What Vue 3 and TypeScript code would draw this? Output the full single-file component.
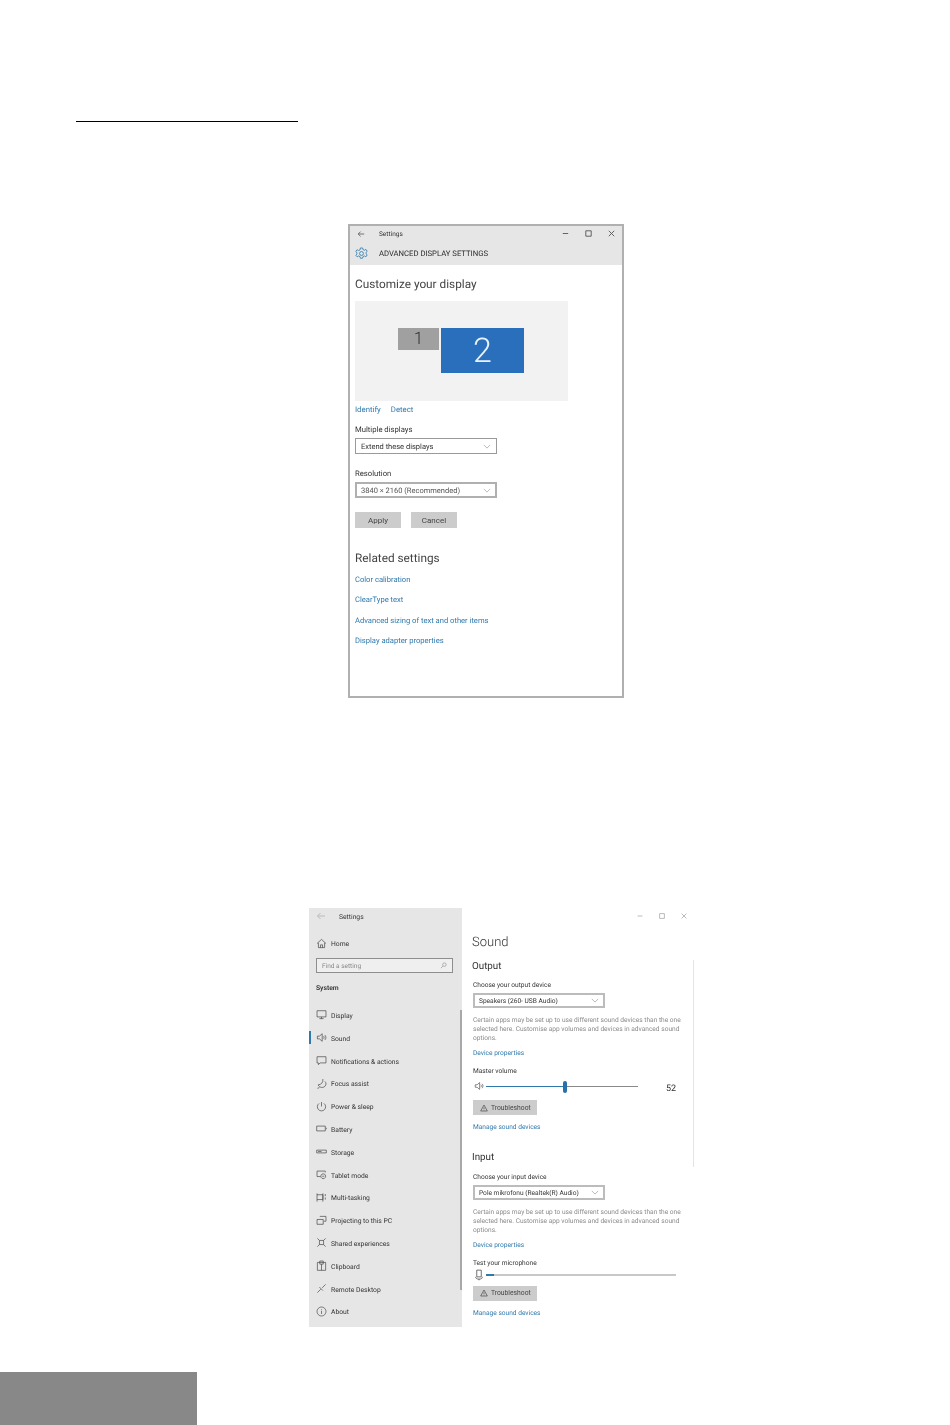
<template>
  <main class="page">
    <div class="rule"></div>

    <section class="display-win">
      <header class="display-head">
        <div class="title-row">
          <svg class="back" viewBox="0 0 10 10"><path d="M9 5H1.5M4.5 2 1.5 5l3 3" /></svg>
          <span class="title-text">Settings</span>
          <div class="win-controls">
            <svg viewBox="0 0 10 10"><path d="M2 5h6" /></svg>
            <svg viewBox="0 0 10 10"><path d="M2 2h6v6H2z" /></svg>
            <svg viewBox="0 0 10 10"><path d="m2 2 6 6M8 2 2 8" /></svg>
          </div>
        </div>
        <div class="page-row">
          <svg class="gear" viewBox="0 0 16 16">
            <path d="M6.6 1.2h2.8l.4 2 1.8.8 1.8-1.1 1.6 2.4-1.4 1.3v1.8l1.4 1.3-1.6 2.4-1.8-1.1-1.8.8-.4 2H6.6l-.4-2-1.8-.8-1.8 1.1L1 10.1l1.4-1.3V7L1 5.7l1.6-2.4 1.8 1.1 1.8-.8z" />
            <circle cx="8" cy="8" r="2.4" />
          </svg>
          <span class="page-title">ADVANCED DISPLAY SETTINGS</span>
        </div>
      </header>

      <div class="display-body">
        <h2 class="big-title">Customize your display</h2>
        <div class="preview">
          <div class="monitor one">1</div>
          <div class="monitor two">2</div>
        </div>
        <div class="identify">
          <a>Identify</a>
          <a>Detect</a>
        </div>
        <div class="field-label first">Multiple displays</div>
        <div class="select wide">
          <span>Extend these displays</span>
          <svg class="chev" viewBox="0 0 10 6"><path d="m1 1 4 4 4-4" /></svg>
        </div>
        <div class="field-label second">Resolution</div>
        <div class="select wide heavy">
          <span class="muted-value">3840 × 2160 (Recommended)</span>
          <svg class="chev" viewBox="0 0 10 6"><path d="m1 1 4 4 4-4" /></svg>
        </div>
        <div class="actions">
          <button>Apply</button>
          <button>Cancel</button>
        </div>
        <h2 class="big-title related">Related settings</h2>
        <div class="related-links">
          <a v-for="link in relatedLinks" :key="link">{{ link }}</a>
        </div>
      </div>
    </section>

    <section class="sound-win">
      <aside class="sidebar">
        <div class="side-title">
          <svg class="back faint" viewBox="0 0 10 10"><path d="M9 5H1.5M4.5 2 1.5 5l3 3" /></svg>
          <span>Settings</span>
        </div>
        <div class="home">
          <svg class="nav-icon" viewBox="0 0 16 16"><path d="M1.5 8 8 2l6.5 6M3.5 7v7h9V7M6.5 14v-4h3v4" /></svg>
          <span>Home</span>
        </div>
        <div class="search">
          <span>Find a setting</span>
          <svg viewBox="0 0 12 12"><circle cx="7.5" cy="4.5" r="3" /><path d="M5.2 6.8 1.5 10.5" /></svg>
        </div>
        <div class="system">System</div>
        <nav class="nav">
          <div v-for="item in navItems" :key="item.label" class="nav-item" :class="{ active: item.active }">
            <svg class="nav-icon" viewBox="0 0 16 16"><path :d="item.icon" /></svg>
            <span>{{ item.label }}</span>
          </div>
        </nav>
        <div class="side-scroll"></div>
      </aside>

      <div class="sound-main">
        <div class="win-controls faint-controls">
          <svg viewBox="0 0 10 10"><path d="M2 5h6" /></svg>
          <svg viewBox="0 0 10 10"><path d="M2 2h6v6H2z" /></svg>
          <svg viewBox="0 0 10 10"><path d="m2 2 6 6M8 2 2 8" /></svg>
        </div>
        <h1 class="sound-title">Sound</h1>

        <h3 class="sub output">Output</h3>
        <div class="small-label choose-out">Choose your output device</div>
        <div class="select narrow">
          <span>Speakers (260- USB Audio)</span>
          <svg class="chev" viewBox="0 0 10 6"><path d="m1 1 4 4 4-4" /></svg>
        </div>
        <p class="hint">{{ hintText }}</p>
        <a class="small-link device">Device properties</a>
        <div class="small-label master">Master volume</div>
        <div class="slider-row">
          <svg class="slider-icon" viewBox="0 0 16 16"><path d="M2 6h3l4-3.500v11L5 10H2zM11 6c1 1.200 1 2.800 0 4M13 4.500c1.800 2 1.800 5 0 7" /></svg>
          <div class="track">
            <div class="track-fill" :style="{ width: volume + '%' }"></div>
            <div class="thumb" :style="{ left: volume + '%' }"></div>
          </div>
          <span class="volume">{{ volume }}</span>
        </div>
        <button class="trouble first-trouble">
          <svg viewBox="0 0 12 12"><path d="M6 1.500 11 10.500H1zM6 5v3M6 9v.5" /></svg>
          Troubleshoot
        </button>
        <a class="small-link manage">Manage sound devices</a>

        <h3 class="sub input">Input</h3>
        <div class="small-label choose-in">Choose your input device</div>
        <div class="select narrow">
          <span>Pole mikrofonu (Realtek(R) Audio)</span>
          <svg class="chev" viewBox="0 0 10 6"><path d="m1 1 4 4 4-4" /></svg>
        </div>
        <p class="hint">{{ hintText }}</p>
        <a class="small-link device">Device properties</a>
        <div class="small-label master">Test your microphone</div>
        <div class="slider-row mic-row">
          <svg class="slider-icon mic-icon" viewBox="0 0 16 16"><path d="M5 1.500h6v9H5zM3.500 10.500c0 2 1.500 3 4.500 3s4.500-1 4.500-3M8 13.500V15" /></svg>
          <div class="track mic-track">
            <div class="mic-level"></div>
          </div>
        </div>
        <button class="trouble second-trouble">
          <svg viewBox="0 0 12 12"><path d="M6 1.500 11 10.500H1zM6 5v3M6 9v.5" /></svg>
          Troubleshoot
        </button>
        <a class="small-link manage">Manage sound devices</a>
        <div class="main-edge"></div>
      </div>
    </section>

    <div class="page-tab"></div>
  </main>
</template>

<script setup lang="ts">
interface NavItem {
  label: string;
  icon: string;
  active?: boolean;
}

const volume = 52;

const hintText =
  'Certain apps may be set up to use different sound devices than the one selected here. Customise app volumes and devices in advanced sound options.';

const relatedLinks = [
  'Color calibration',
  'ClearType text',
  'Advanced sizing of text and other items',
  'Display adapter properties'
];

const navItems: NavItem[] = [
  { label: 'Display', icon: 'M1.500 2.500h13v9h-13zM8 11.500v2.500M5 14h6' },
  { label: 'Sound', icon: 'M2 6h3l4-3.500v11L5 10H2zM11 6c1 1.200 1 2.800 0 4M13 4.500c1.800 2 1.800 5 0 7', active: true },
  { label: 'Notifications & actions', icon: 'M1.500 2.500h13v9H6l-2.500 2.500v-2.500h-2z' },
  { label: 'Focus assist', icon: 'M10 1.500c.5 5-2 8-7 8.500 2 4 7 5 10 2 2-2 2-5 0-7M5 14l-3 1' },
  { label: 'Power & sleep', icon: 'M8 1.500V8M4.500 3.500a6 6 0 1 0 7 0' },
  { label: 'Battery', icon: 'M1 4.500h12.500v7H1zM15 7v2' },
  { label: 'Storage', icon: 'M1 6h14v4H1zM3 8h5' },
  { label: 'Tablet mode', icon: 'M1.500 3h12v2M1.500 3v8h5M10.500 7a3.500 3.500 0 1 0 .01 0M9 10.500h3' },
  { label: 'Multi-tasking', icon: 'M1.500 2v12M10 2v12M1.500 4H10v7H1.500M13.500 3v3M13.500 8v3' },
  { label: 'Projecting to this PC', icon: 'M5.500 2h9v7h-3M1.500 6.500h9v7h-9z' },
  { label: 'Shared experiences', icon: 'M2 2l3 3M14 2l-3 3M2 14l3-3M14 14l-3-3M5 5h6v6H5z' },
  { label: 'Clipboard', icon: 'M2 3.500h12V15H2zM5.500 1.500h5V6h-5zM8 6v9' },
  { label: 'Remote Desktop', icon: 'M14 2 9 7M2 14l5-5M5 6l5 5' },
  { label: 'About', icon: 'M8 1.500a6.500 6.500 0 1 0 .01 0M8 7v4.500M8 4.500v1' }
];
</script>

<style>
html,
body {
  margin: 0;
  background: #fff;
}
</style>

<style scoped>
.page {
  width: 950px;
  height: 1425px;
  padding-top: 121px;
  box-sizing: border-box;
  overflow: hidden;
  display: flex;
  flex-direction: column;
  font-family: Roboto, 'Open Sans', sans-serif;
  color: #333;
  text-rendering: geometricPrecision;
}

a {
  color: #2f79ad;
}

svg {
  fill: none;
  stroke: #555;
  stroke-width: 1;
  flex: none;
}

h1,
h2,
h3,
p {
  margin: 0;
  font-weight: 400;
}

.rule {
  width: 222px;
  height: 1px;
  margin-left: 76px;
  background: #000;
}

.display-win {
  width: 276px;
  height: 474px;
  margin: 102px 0 0 348px;
  box-sizing: border-box;
  border: 2px solid #b0b0b0;
  filter: blur(0.35px);
}

.display-head {
  height: 39px;
  background: #e6e6e6;
}

.title-row {
  height: 15px;
  display: flex;
  align-items: center;
  padding-left: 7px;
}

.back {
  width: 8px;
  height: 8px;
}

.back.faint {
  stroke: #bbb;
  width: 10px;
  height: 10px;
}

.title-text {
  margin-left: 14px;
  font-size: 6.500px;
}

.win-controls {
  margin-left: auto;
  display: flex;
}

.win-controls svg {
  width: 9px;
  height: 9px;
  padding: 0 7px;
}

.title-row .win-controls {
  margin-right: -1px;
}

.page-row {
  height: 24px;
  display: flex;
  align-items: center;
  padding-left: 5px;
}

.gear {
  width: 13px;
  height: 13px;
  stroke: #2f79ad;
}

.page-title {
  margin-left: 11px;
  font-size: 7.700px;
  white-space: nowrap;
  color: #2a2a2a;
}

.display-body {
  padding: 10px 0 0 5px;
}

.big-title {
  font-size: 11.800px;
  line-height: 18px;
  color: #444;
}

.preview {
  width: 213px;
  height: 100px;
  margin-top: 8px;
  padding: 27px 0 0 43px;
  box-sizing: border-box;
  display: flex;
  align-items: flex-start;
  gap: 2px;
  background: #f2f2f2;
}

.monitor {
  display: flex;
  align-items: center;
  justify-content: center;
  font-weight: 300;
}

.monitor.one {
  width: 41px;
  height: 22px;
  background: #a0a0a0;
  font-size: 17px;
  color: #333;
}

.monitor.two {
  width: 83px;
  height: 45px;
  background: #2a6fbb;
  font-size: 34px;
  color: #e8f2fb;
}

.identify {
  margin-top: 4px;
  display: flex;
  gap: 10px;
  font-size: 7.800px;
  line-height: 10px;
}

.field-label {
  font-size: 7.700px;
  line-height: 10px;
}

.field-label.first {
  margin-top: 10px;
}

.field-label.second {
  margin-top: 15px;
}

.select {
  margin-top: 3px;
  box-sizing: border-box;
  display: flex;
  align-items: center;
  justify-content: space-between;
  border: 1px solid #9a9a9a;
  background: #fff;
  padding: 0 5px;
  font-size: 7.500px;
  color: #333;
  white-space: nowrap;
}

.select.wide {
  width: 142px;
  height: 16px;
}

.select.wide.heavy {
  border: 2px solid #b0b0b0;
  padding: 0 4px;
}

.select.narrow {
  width: 132px;
  height: 15px;
  margin: 3px 0 0 1px;
  border: 2px solid #bcbcbc;
  padding: 0 4px;
  font-size: 6.600px;
}

.muted-value {
  color: #555;
}

.chev {
  width: 8px;
  height: 5px;
  stroke: #aaa;
}

.actions {
  margin-top: 14px;
  display: flex;
  gap: 10px;
}

button {
  font-family: inherit;
  border: 0;
  padding: 0;
  background: #cccccc;
  color: #444;
}

.actions button {
  width: 46px;
  height: 16px;
  font-size: 8px;
}

.big-title.related {
  margin-top: 21px;
}

.related-links {
  margin-top: 8px;
  display: flex;
  flex-direction: column;
  align-items: flex-start;
  gap: 10.300px;
  font-size: 7.600px;
  line-height: 10px;
}

.sound-win {
  width: 385px;
  height: 419px;
  margin: 210px 0 0 309px;
  display: grid;
  grid-template-columns: 153px 232px;
  filter: blur(0.35px);
}

.sidebar {
  position: relative;
  background: #e6e6e6;
  font-size: 6.750px;
}

.side-title {
  height: 16px;
  display: flex;
  align-items: center;
  padding-left: 7px;
  gap: 13px;
}

.side-title span,
.home span,
.nav-item span {
  padding-top: 2px;
}

.home {
  height: 22px;
  margin-top: 8px;
  padding-left: 7px;
  display: flex;
  align-items: center;
  gap: 4px;
}

.nav-icon {
  width: 11px;
  height: 11px;
  stroke: #444;
}

.search {
  width: 137px;
  height: 15px;
  margin: 4px 0 0 7px;
  box-sizing: border-box;
  border: 1px solid #8e8e8e;
  background: #efefef;
  display: flex;
  align-items: center;
  justify-content: space-between;
  padding: 0 5px;
  font-size: 6.500px;
  color: #888;
}

.search svg {
  width: 7px;
  height: 7px;
  stroke: #888;
}

.system {
  margin: 9.500px 0 0 7px;
  font-size: 6.750px;
  line-height: 10px;
  font-weight: 600;
  color: #333;
}

.nav {
  margin-top: 11.100px;
}

.nav-item {
  position: relative;
  height: 22.800px;
  padding-left: 7px;
  display: flex;
  align-items: center;
  gap: 4px;
  white-space: nowrap;
}

.nav-item.active::before {
  content: '';
  position: absolute;
  left: 0;
  top: 5px;
  width: 2px;
  height: 13px;
  background: #2f79ad;
}

.side-scroll {
  position: absolute;
  right: 0;
  top: 102px;
  width: 2px;
  height: 280px;
  background: #a8a8a8;
}

.sound-main {
  position: relative;
  padding-left: 10px;
  background: #fff;
}

.faint-controls {
  height: 16px;
  justify-content: flex-end;
  align-items: center;
  margin-right: -1px;
}

.faint-controls svg {
  width: 8px;
  height: 8px;
  padding: 0 7px;
  stroke: #aaa;
}

.sound-title {
  margin-top: 10px;
  font-size: 13px;
  font-weight: 300;
  line-height: 18px;
}

.sub {
  font-size: 9.800px;
  line-height: 12px;
}

.sub.output {
  margin-top: 9px;
}

.sub.input {
  margin-top: 20px;
}

.small-label {
  font-size: 6.600px;
  line-height: 10px;
  margin-left: 1px;
}

.choose-out {
  margin-top: 7px;
}

.choose-in {
  margin-top: 8px;
}

.master {
  margin-top: 8.500px;
}

.hint {
  width: 212px;
  margin: 7.500px 0 0 1px;
  font-size: 6.600px;
  line-height: 9px;
  color: #8a8a8a;
}

.small-link {
  display: block;
  margin-left: 1px;
  font-size: 6.600px;
  line-height: 10px;
}

.device {
  margin-top: 5px;
}

.manage {
  margin-top: 7px;
}

.slider-row {
  position: relative;
  height: 12px;
  margin-top: 4px;
  display: flex;
  align-items: center;
  padding-left: 2px;
}

.slider-icon {
  width: 10px;
  height: 10px;
  stroke: #444;
}

.mic-icon {
  width: 12px;
  height: 12px;
  margin-left: -1px;
  margin-right: -1px;
}

.track {
  position: relative;
  width: 152px;
  height: 1px;
  margin-left: 2px;
  background: #8a8a8a;
}

.track-fill {
  height: 100%;
  background: #2f79ad;
}

.thumb {
  position: absolute;
  top: -5px;
  width: 4px;
  height: 12px;
  margin-left: -2px;
  border-radius: 2px;
  background: #2a6fa8;
}

.volume {
  position: absolute;
  left: 194px;
  top: 3px;
  font-size: 9px;
  line-height: 12px;
  color: #333;
}

.trouble {
  width: 64px;
  height: 15px;
  margin-left: 1px;
  display: flex;
  align-items: center;
  padding-left: 7px;
  gap: 3px;
  font-size: 6.750px;
  white-space: nowrap;
}

.trouble svg {
  width: 8px;
  height: 8px;
  stroke: #444;
}

.first-trouble {
  margin-top: 8px;
}

.second-trouble {
  margin-top: 5px;
}

.mic-row {
  margin-top: 0.500px;
}

.mic-track {
  width: 190px;
  height: 2px;
  background: #c8c8c8;
}

.mic-level {
  width: 8px;
  height: 100%;
  background: #2f79ad;
}

.main-edge {
  position: absolute;
  right: 0;
  top: 52px;
  width: 1px;
  height: 207px;
  background: #e4e4e4;
}

.page-tab {
  width: 197px;
  height: 53px;
  margin-top: 45px;
  background: #888;
}
</style>
